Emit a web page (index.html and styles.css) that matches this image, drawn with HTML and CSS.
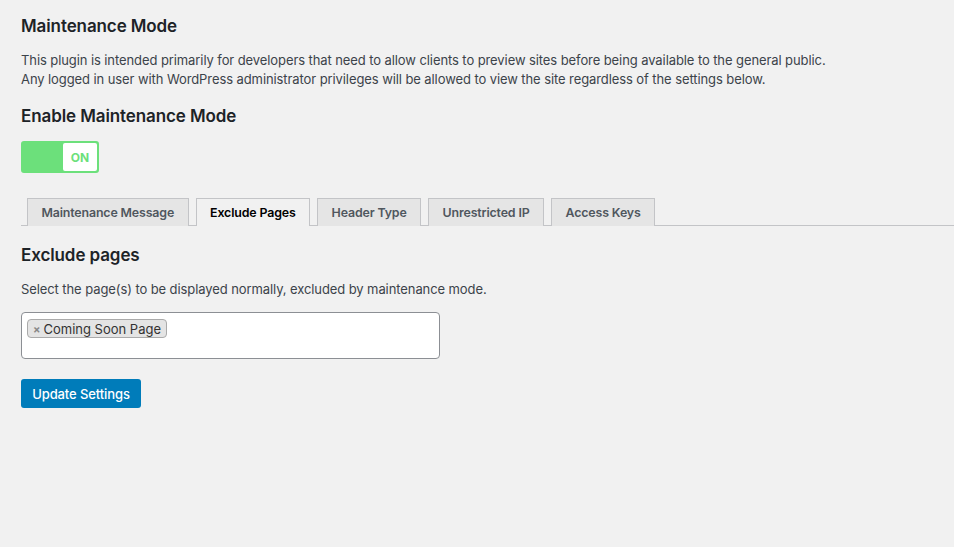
FILE: index.html
```html
<!DOCTYPE html>
<html>
<head>
<meta charset="utf-8">
<link rel="stylesheet" href="styles.css">
</head>
<body>
<div class="wrap">
  <h2 class="title">Maintenance Mode</h2>
  <p class="desc">This plugin is intended primarily for developers that need to allow clients to preview sites before being available to the general public.<br>Any logged in user with WordPress administrator privileges will be allowed to view the site regardless of the settings below.</p>
  <h2 class="title sub">Enable Maintenance Mode</h2>
  <div class="toggle"><span class="track"></span><span class="knob">ON</span></div>
  <nav class="tabs">
    <span class="tab">Maintenance Message</span>
    <span class="tab active">Exclude Pages</span>
    <span class="tab">Header Type</span>
    <span class="tab">Unrestricted IP</span>
    <span class="tab">Access Keys</span>
  </nav>
  <h2 class="title sec">Exclude pages</h2>
  <p class="desc small">Select the page(s) to be displayed normally, excluded by maintenance mode.</p>
  <div class="select"><span class="chip"><span class="x">×</span>Coming Soon Page</span></div>
  <button class="btn">Update Settings</button>
</div>
</body>
</html>
```
FILE: styles.css
```css
html, body { margin: 0; padding: 0; }
body {
  background: #f1f1f1;
  font-family: Inter, "Noto Sans", sans-serif;
  color: #3c434a;
  width: 954px;
  height: 547px;
  overflow: hidden;
}
.wrap { padding: 0 0 0 21px; }
.title {
  margin: 0;
  font-size: 17px;
  font-weight: 600;
  color: #1d2327;
  line-height: 24px;
  letter-spacing: -0.1px;
}
.title:first-child { padding-top: 14px; }
.desc {
  margin: 13px 0 0;
  font-size: 13px;
  line-height: 19px;
  letter-spacing: -0.09px;
}
.sub { margin-top: 15px; }
.toggle {
  margin-top: 13px;
  width: 78px;
  height: 32px;
  box-sizing: border-box;
  border: 2px solid #6ce07b;
  border-radius: 3px;
  background: #6ce07b;
  display: flex;
}
.track { width: 40px; }
.knob {
  flex: 1;
  background: #fff;
  border-radius: 2px;
  color: #6ce07b;
  font-weight: 700;
  font-size: 12px;
  display: flex;
  align-items: center;
  justify-content: center;
}
.tabs {
  margin-top: 25px;
  display: flex;
  gap: 7px;
  padding-left: 6px;
  border-bottom: 1px solid #c3c4c7;
  height: 27px;
}
.tab {
  box-sizing: border-box;
  height: 28px;
  padding: 0 13.5px;
  border: 1px solid #c3c4c7;
  border-bottom: none;
  background: #e5e5e5;
  font-size: 12.4px;
  letter-spacing: -0.15px;
  font-weight: 600;
  color: #50575e;
  display: flex;
  align-items: center;
}
.tab.active { background: #f1f1f1; color: #000; }
.sec { margin-top: 17px; }
.small { margin-top: 13px; }
.select {
  margin-top: 13px;
  width: 419px;
  height: 47px;
  box-sizing: border-box;
  background: #fff;
  border: 1px solid #8c8f94;
  border-radius: 4px;
  padding: 6px 5px;
  display: flex;
  align-items: flex-start;
}
.chip {
  display: inline-flex;
  align-items: center;
  height: 19px;
  box-sizing: border-box;
  padding: 0 5px;
  background: #e4e4e4;
  border: 1px solid #aaa;
  border-radius: 4px;
  font-size: 13px;
  color: #333;
}
.x { color: #888; font-weight: 700; font-size: 11px; margin-right: 3px; }
.btn {
  display: block;
  margin-top: 20px;
  width: 120px;
  height: 29px;
  border: none;
  border-radius: 3px;
  background: #007cba;
  color: #fff;
  font-family: inherit;
  font-size: 13px;
  font-weight: 500;
  letter-spacing: -0.1px;
}
```
